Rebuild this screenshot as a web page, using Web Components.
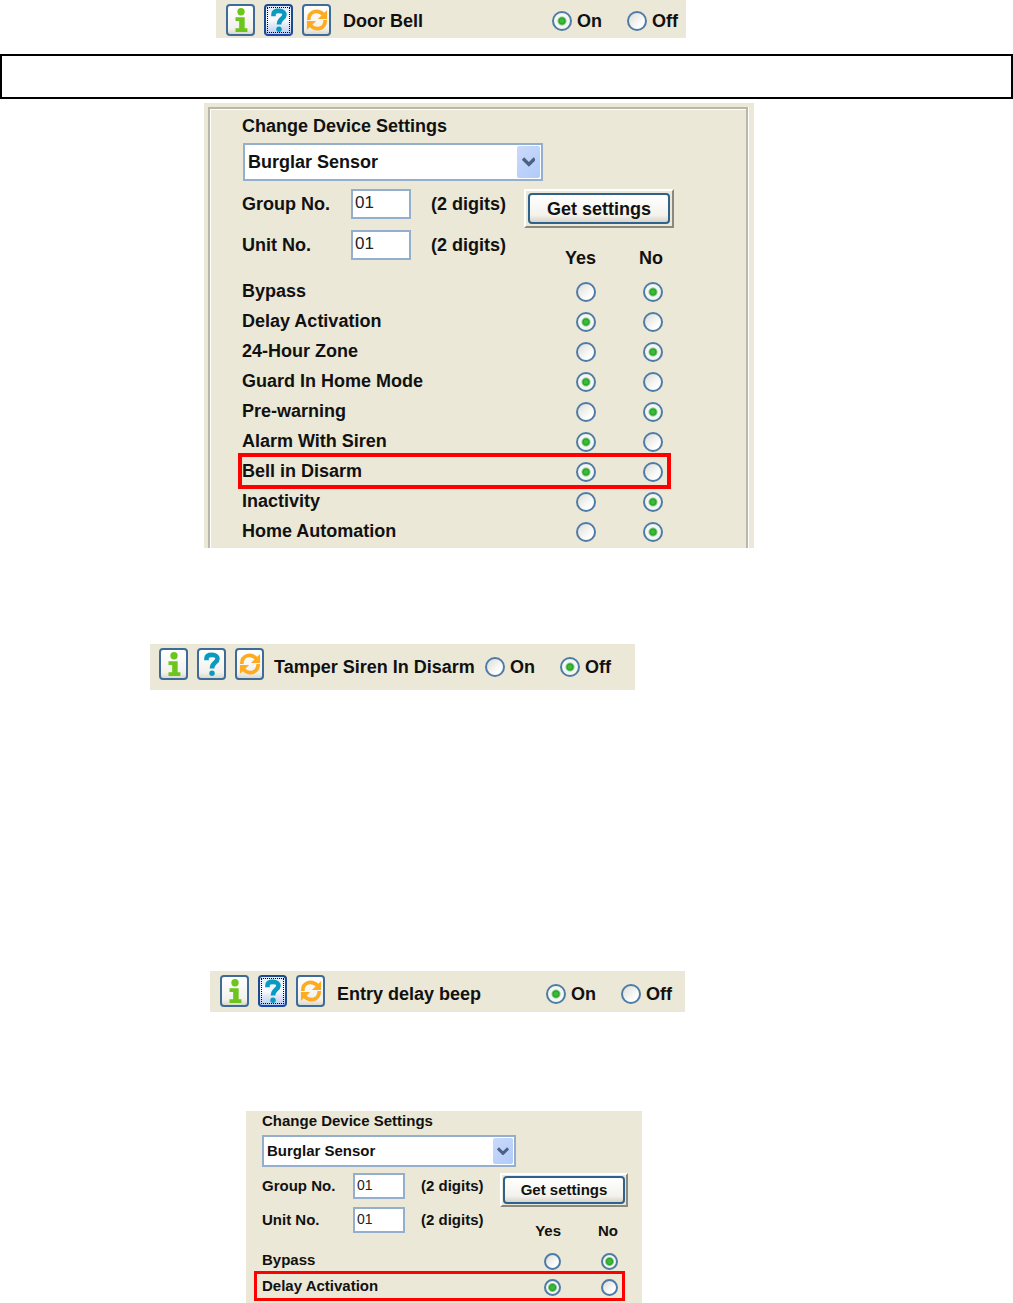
<!DOCTYPE html>
<html lang="en">
<head>
<meta charset="utf-8">
<title>Control Panel Settings</title>
<style>
  body {
    margin: 0;
    background: #fff;
    color: #111;
    font: bold 18px/20px "Liberation Sans", Arial, sans-serif;
  }
  main {
    display: flex;
    flex-direction: column;
    align-items: flex-start;
  }
  .rule {
    align-self: stretch;
    box-sizing: border-box;
    height: 45px;
    margin: 16px 0 4px;
    border: 2px solid #000;
  }
  .door-bell { margin-left: 216px; --bar-width: 470px; --bar-height: 38px; }
  .device { margin-left: 204px; }
  .tamper {
    margin: 96px 0 0 150px;
    --bar-width: 485px;
    --bar-height: 46px;
    --bar-padding: 4px 0 4px 9px;
    --name-gap: 10px;
    --name-width: 211px;
  }
  .entry { margin: 281px 0 0 210px; --bar-width: 475px; --bar-height: 41px; }
  .device-small { margin: 99px 0 0 246px; }
</style>
</head>
<body>
<main>
  <setting-bar class="door-bell" value="on" focused>Door Bell</setting-bar>
  <div class="rule"></div>
  <device-settings class="device" highlight="Bell in Disarm"
    rows="Bypass:no,Delay Activation:yes,24-Hour Zone:no,Guard In Home Mode:yes,Pre-warning:no,Alarm With Siren:yes,Bell in Disarm:yes,Inactivity:no,Home Automation:no">Change Device Settings</device-settings>
  <setting-bar class="tamper" value="off">Tamper Siren In Disarm</setting-bar>
  <setting-bar class="entry" value="on" focused>Entry delay beep</setting-bar>
  <device-settings class="device-small" small highlight="Delay Activation"
    rows="Bypass:no,Delay Activation:yes">Change Device Settings</device-settings>
</main>

<script>
// Radio look shared by the bars and the settings table.
const radioStyle = `
  input[type=radio] {
    appearance: none;
    box-sizing: border-box;
    flex: none;
    width: var(--radio, 20px);
    height: var(--radio, 20px);
    margin: 0;
    border: 2px solid #4f7ca6;
    border-radius: 50%;
    background: linear-gradient(135deg, #dcdcd6, #fff 75%);
    vertical-align: middle;
  }
  input[type=radio]:checked {
    background: radial-gradient(circle, #3cb83c 0 2px, #1f9f1f 3px, #f4f6f2 5px);
  }
`;

class IconButton extends HTMLElement {
  static icons = {
    info: `<g fill="#6cc51d"><circle cx="12" cy="4" r="4"/>
      <path d="M6 10h10v12h3v4H6v-4h4v-8H6z"/></g>`,
    help: `<path d="M6 9V7c0-3 3-4 6-4 4 0 6 2 6 4 0 5-6 4-6 11" fill="none" stroke="#0a9ac0" stroke-width="5"/>
      <circle cx="12" cy="23" r="3" fill="#0a9ac0"/>`,
    refresh: `<g fill="none" stroke="#ffab20" stroke-width="4">
      <path d="M3 13C3 3 13 1 19 7"/><path d="M21 13c0 10-10 12-16 6"/></g>
      <path d="M23 2v10H13zM1 24V14h10z" fill="#ffab20"/>`,
  };

  constructor() {
    super();
    this.attachShadow({mode: 'open'});
    const icon = this.getAttribute('icon');
    this.shadowRoot.innerHTML = `
      <style>
        :host { display: block; }
        button {
          display: flex;
          align-items: center;
          justify-content: center;
          box-sizing: border-box;
          width: 29px;
          height: 32px;
          padding: 0;
          border: 2px solid #3e6b98;
          border-radius: 4px;
          background: linear-gradient(#fff, #f2f1ec 80%, #dcd8cc);
        }
        :host([focused]) button {
          border-color: #1b4a91;
          border-bottom-color: #1746ae;
          background: linear-gradient(#e2ecfb, #f8f9fb 50%, #b9cdf0);
          outline: 1px dotted #000;
          outline-offset: -4px;
        }
        svg { width: 22px; height: 24px; }
      </style>
      <button type="button" aria-label="${icon}">
        <svg viewBox="0 0 24 26">${IconButton.icons[icon]}</svg>
      </button>
    `;
  }
}
customElements.define('icon-button', IconButton);

class SettingBar extends HTMLElement {
  constructor() {
    super();
    this.attachShadow({mode: 'open'});
    this.render();
  }

  render() {
    const on = this.getAttribute('value') === 'on';
    this.shadowRoot.innerHTML = `
      <style>
        :host {
          display: flex;
          align-items: center;
          box-sizing: border-box;
          width: var(--bar-width);
          max-width: 100%;
          height: var(--bar-height);
          padding: var(--bar-padding, 4px 0 0 10px);
          background: #ebe8d7;
          white-space: nowrap;
        }
        .icons { display: flex; align-self: flex-start; gap: 9px; margin-right: var(--name-gap, 12px); }
        .name { flex: none; width: var(--name-width, 209px); }
        label { display: flex; flex: none; align-items: center; gap: 5px; width: 75px; }
        label + label { width: auto; }
        ${radioStyle}
      </style>
      <div class="icons">
        <icon-button icon="info"></icon-button>
        <icon-button icon="help" ${this.hasAttribute('focused') ? 'focused' : ''}></icon-button>
        <icon-button icon="refresh"></icon-button>
      </div>
      <span class="name"><slot></slot></span>
      <label><input type="radio" name="state" ${on ? 'checked' : ''}>On</label>
      <label><input type="radio" name="state" ${on ? '' : 'checked'}>Off</label>
    `;
  }
}
customElements.define('setting-bar', SettingBar);

class XpSelect extends HTMLElement {
  constructor() {
    super();
    this.attachShadow({mode: 'open'});
    this.shadowRoot.innerHTML = `
      <style>
        :host {
          display: flex;
          box-sizing: border-box;
          padding: 1px;
          border: 2px solid #93afcd;
          background: #fff;
        }
        select {
          appearance: none;
          flex: 1;
          min-width: 0;
          padding: 0 2px;
          border: 0;
          background: none;
          color: inherit;
          font: inherit;
        }
        .arrow {
          display: flex;
          align-items: center;
          justify-content: center;
          width: var(--arrow, 23px);
          border-radius: 2px;
          background: linear-gradient(135deg, #cbd9fb, #b0cbfa);
          pointer-events: none;
        }
        svg { width: 60%; }
      </style>
      <select aria-label="Device type"><option>${this.getAttribute('value')}</option></select>
      <span class="arrow">
        <svg viewBox="0 0 14 10"><path d="M1 1.5l6 6 6-6" fill="none" stroke="#4d6185" stroke-width="3.5"/></svg>
      </span>
    `;
  }
}
customElements.define('xp-select', XpSelect);

class DeviceSettings extends HTMLElement {
  constructor() {
    super();
    this.attachShadow({mode: 'open'});
    this.render();
  }

  renderRow(row, index) {
    const [name, value] = row.split(':');
    const marked = name === this.getAttribute('highlight') ? 'class="marked"' : '';
    const radio = (option) => `<td><input type="radio" name="row${index}"
      aria-label="${name} ${option}" ${option === value ? 'checked' : ''}></td>`;
    return `<tr ${marked}><th scope="row">${name}</th>${radio('yes')}${radio('no')}</tr>`;
  }

  render() {
    const rows = this.getAttribute('rows').split(',');
    this.shadowRoot.innerHTML = `
      <style>
        :host {
          --row: 30px;
          --column: 67px;
          display: block;
          box-sizing: border-box;
          width: 550px;
          max-width: 100%;
          padding: 4px 6px 0 4px;
          background: #ebe8d7;
          white-space: nowrap;
        }
        .group {
          padding: 7px 0 2px 32px;
          border: solid #bab7a8;
          border-width: 2px 2px 0;
          box-shadow: inset 1px 1px #fff, 1px 0 #fff;
        }
        h2 { margin: 0 0 7px; font: inherit; line-height: 20px; }
        xp-select { width: 300px; height: 38px; margin: 0 0 8px 1px; }
        .fields {
          display: grid;
          grid-template-columns: 109px 80px 93px 150px;
          grid-auto-rows: 30px;
          row-gap: 11px;
          align-items: center;
        }
        .fields input {
          box-sizing: border-box;
          width: 60px;
          height: 30px;
          padding: 0 2px 2px;
          border: 2px solid #93afcd;
          background: #fff;
          color: #222;
          font: 17px "Liberation Sans", Arial, sans-serif;
        }
        /* raised frame round the default button */
        .action {
          display: flex;
          align-self: start;
          box-sizing: border-box;
          height: 39px;
          padding: 2px;
          border: 2px solid;
          border-color: #fff #8b897d #8b897d #fff;
        }
        .action button {
          flex: 1;
          padding: 0;
          border: 2px solid #2f618f;
          border-radius: 4px;
          background: linear-gradient(#fff, #f3f2ec 75%, #d8d4c8);
          color: inherit;
          font: inherit;
        }
        table { width: 427px; margin: -12px 0 0 -1px; border-collapse: collapse; table-layout: fixed; }
        thead tr { height: 28px; }
        tbody tr { height: var(--row); }
        th, td { padding: 0 5px 0 0; text-align: right; font: inherit; line-height: 20px; }
        .option { width: var(--column); box-sizing: border-box; vertical-align: top; }
        th[scope=row] { padding-left: 1px; text-align: left; }
        .marked { outline: 4px solid #f00; outline-offset: -1px; }
        ${radioStyle}

        :host([small]) {
          --row: 26px;
          --column: 57px;
          --radio: 17px;
          --arrow: 20px;
          width: 396px;
          padding: 0 0 4px 16px;
          font-size: 15px;
        }
        :host([small]) .group { padding: 0; border: 0; box-shadow: none; }
        :host([small]) h2 { margin-bottom: 4px; }
        :host([small]) xp-select { width: 254px; height: 32px; margin: 0 0 6px; }
        :host([small]) .fields {
          grid-template-columns: 91px 68px 79px 128px;
          grid-auto-rows: 26px;
          row-gap: 8px;
        }
        :host([small]) .fields input { width: 52px; height: 26px; font-size: 14px; }
        :host([small]) .action { height: 34px; padding: 1px; }
        :host([small]) table { width: 367px; margin: -12px 0 0 -6px; }
        :host([small]) thead tr { height: 26px; }
        :host([small]) th[scope=row] { padding-left: 6px; }
        :host([small]) .marked { outline-width: 3px; }
      </style>
      <div class="group">
        <h2><slot></slot></h2>
        <xp-select value="Burglar Sensor"></xp-select>
        <div class="fields">
          <label for="group">Group No.</label>
          <input id="group" value="01" maxlength="2">
          <span>(2 digits)</span>
          <div class="action"><button type="button">Get settings</button></div>
          <label for="unit">Unit No.</label>
          <input id="unit" value="01" maxlength="2">
          <span>(2 digits)</span>
        </div>
        <table>
          <thead>
            <tr><td></td><th class="option" scope="col">Yes</th><th class="option" scope="col">No</th></tr>
          </thead>
          <tbody>${rows.map((row, i) => this.renderRow(row, i)).join('')}</tbody>
        </table>
      </div>
    `;
  }
}
customElements.define('device-settings', DeviceSettings);
</script>
</body>
</html>
